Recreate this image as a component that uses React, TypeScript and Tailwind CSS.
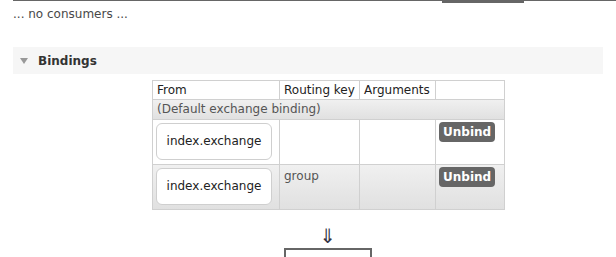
import type React from 'react'

type Binding = {
  source: string
  routingKey: string
  args: string
}

const rows: Binding[] = [
  { source: 'index.exchange', routingKey: '', args: '' },
  { source: 'index.exchange', routingKey: 'group', args: '' },
]

const font = { fontFamily: '"DejaVu Sans", Verdana, sans-serif' }

const BindingRow: React.FC<{ row: Binding; alt: boolean }> = ({ row, alt }) => {
  const bg = alt ? 'bg-gradient-to-b from-[#f0f0f0] to-[#e0e0e0]' : 'bg-white'
  return (
    <tr className={`${bg} h-[45px] align-top`}>
      <td className="border border-[#d0d0d0] p-[3px] pb-[4px]">
        <div className="flex h-[37px] w-[116px] items-center justify-center rounded-[6px] border border-[#cfcfcf] bg-white text-[12px] text-[#222]">
          {row.source}
        </div>
      </td>
      <td className="border border-[#d0d0d0] px-[4px] pt-[3px] text-[12px] leading-[16px] text-[#555]">{row.routingKey}</td>
      <td className="border border-[#d0d0d0] px-[4px] pt-[3px]">{row.args}</td>
      <td className="border border-[#d0d0d0] px-[3px] pt-[2px]">
        <button className="h-[20px] rounded-[4px] bg-[#666] px-[4px] text-[12px] leading-[20px] font-bold text-white">
          Unbind
        </button>
      </td>
    </tr>
  )
}

export default function App() {
  return (
    <div className="h-[257px] w-[616px] overflow-hidden bg-white text-[#444]" style={font}>
      {/* верхняя линия с выделенным табом */}
      <div className="ml-[13px] flex items-start">
        <div className="h-px w-[429px] bg-[#666]" />
        <div className="h-[3px] w-[82px] bg-[#666]" />
        <div className="h-px flex-1 bg-[#666]" />
      </div>
      <div className="ml-[13px] mt-[3px] text-[12px] leading-[16px] text-[#484848]">... no consumers ...</div>

      <div className="mx-[13px] mt-[25px] flex h-[27px] items-center bg-[#f6f6f6]">
        <span className="ml-[7px] mr-[10px] h-0 w-0 border-x-[4px] border-t-[6px] border-x-transparent border-t-[#999]" />
        <span className="text-[12px] font-bold text-[#333]">Bindings</span>
      </div>

      <div className="ml-[152px] mt-[6px]">
        <table className="border-collapse text-left text-[12px] leading-[17px] text-[#222]">
          <thead>
            <tr className="h-[19px] bg-white">
              <th className="w-[127px] border border-[#d0d0d0] px-[4px] font-normal">From</th>
              <th className="w-[80px] border border-[#d0d0d0] px-[4px] font-normal">Routing key</th>
              <th className="w-[76px] border border-[#d0d0d0] px-[4px] font-normal">Arguments</th>
              <th className="w-[69px] border border-[#d0d0d0] px-[4px] font-normal"></th>
            </tr>
          </thead>
          <tbody>
            <tr className="h-[20px] bg-gradient-to-b from-[#f0f0f0] to-[#e0e0e0]">
              <td colSpan={4} className="border border-[#d0d0d0] px-[4px] text-[#555]">
                (Default exchange binding)
              </td>
            </tr>
            {rows.map((r, i) => (
              <BindingRow key={i} row={r} alt={i % 2 === 1} />
            ))}
          </tbody>
        </table>
      </div>

      <div className="mt-[16px] flex flex-col items-center pl-[40px]">
        <span className="text-[20px] leading-[20px] text-[#334]">⇓</span>
        <div className="mt-[2px] h-[20px] w-[88px] border-x-2 border-t-2 border-[#666]" />
      </div>
    </div>
  )
}
